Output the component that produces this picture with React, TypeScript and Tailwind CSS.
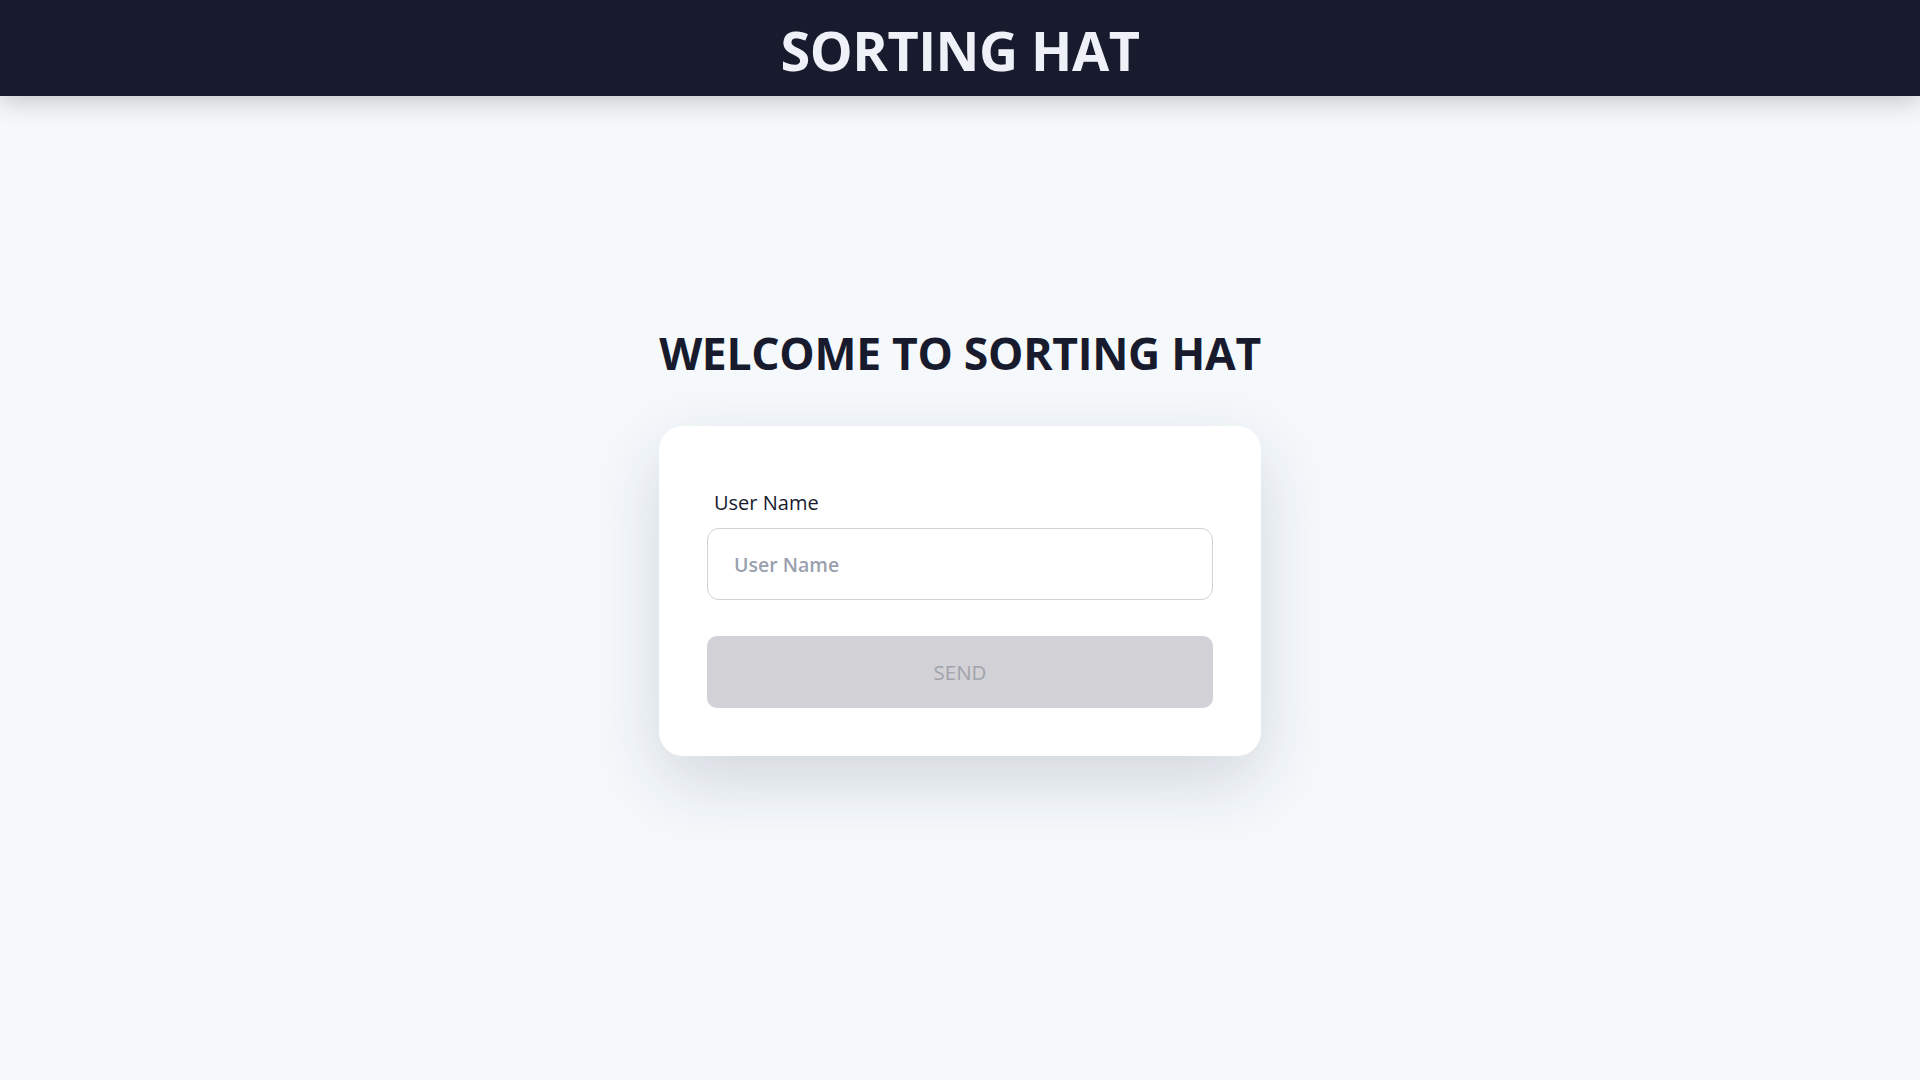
export default function App() {
  return (
    <div className="min-h-screen bg-[#f5f9fc] font-['Open_Sans',sans-serif]">
      <header className="h-[96px] bg-[#181b2d] flex items-center justify-center pt-[4px] shadow-[0_6px_24px_rgba(0,0,0,0.2)] relative">
        <h1 className="text-[54px] font-bold text-[#eef2f8] leading-none tracking-[-0.5px]">SORTING HAT</h1>
      </header>

      <main className="flex flex-col items-center pt-[227px]">
        <h2 className="text-[44.5px] font-bold text-[#181b2d] leading-[60px] tracking-[-0.3px]">
          WELCOME TO SORTING HAT
        </h2>

        <div className="mt-[43px] w-[602px] bg-white rounded-[24px] px-[48px] pt-[64px] pb-[48px] shadow-[0_25px_70px_rgba(30,40,60,0.16)]">
          <label className="block pl-[7px] text-[20px] text-[#181b2d] leading-[26px]">User Name</label>
          <input
            className="mt-[12px] w-full h-[72px] rounded-[12px] border border-[#cfd2d6] px-[26px] text-[19.5px] font-semibold placeholder:text-[#9aa1ae] outline-none"
            placeholder="User Name"
          />
          <button
            disabled
            className="mt-[36px] w-full h-[72px] rounded-[10px] bg-[#d1d1d6] text-[20.5px] text-[#a3a3ab]"
          >
            SEND
          </button>
        </div>
      </main>
    </div>
  );
}
